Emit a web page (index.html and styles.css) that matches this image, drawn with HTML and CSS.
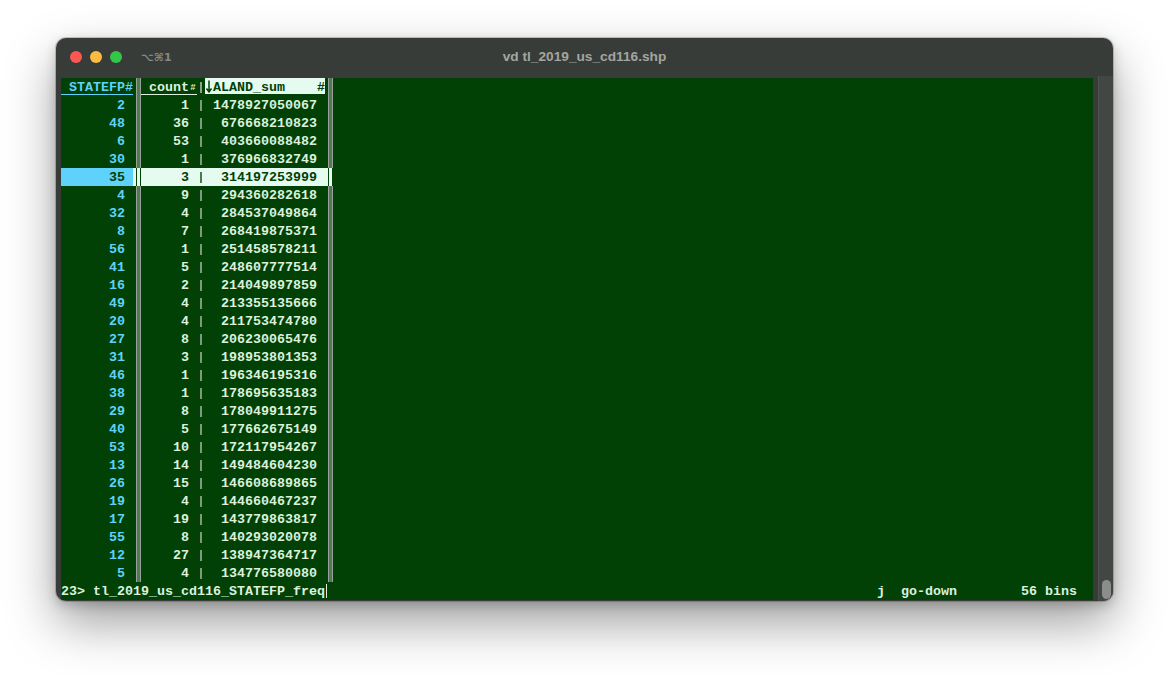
FILE: index.html
```html
<!DOCTYPE html>
<html lang="en">
<head>
<meta charset="utf-8">
<title>vd tl_2019_us_cd116.shp</title>
<link rel="stylesheet" href="styles.css">
</head>
<body>
<div class="window">
  <header class="titlebar">
    <div class="lights"><i class="light red"></i><i class="light yellow"></i><i class="light green"></i></div>
    <span class="shortcut">⌥⌘1</span>
    <span class="title">vd tl_2019_us_cd116.shp</span>
  </header>
  <div class="content">
    <main class="term">
      <div class="sheet" id="sheet">
        <div class="row head">
          <div class="c1"><span class="ul key">&nbsp;STATEFP#</span></div><div class="bar"></div>
          <div class="c2"><span class="ul">&nbsp;count<small>#</small></span></div><div class="sep"></div>
          <div class="c3"><span class="ul cur"><span class="sortname"><svg class="arrow" viewBox="0 0 8 16" width="8" height="16" aria-hidden="true"><path d="M4 2.5V13.5M1.5 10.5L4 14L6.5 10.5" fill="none" stroke="#024106" stroke-width="1.5"/></svg>ALAND_sum</span><span>#</span></span></div><div class="bar"></div>
        </div>
        <div class="row"><div class="c1">2</div><div class="bar"></div><div class="c2">1</div><div class="sep"></div><div class="c3">1478927050067</div><div class="bar"></div></div>
        <div class="row"><div class="c1">48</div><div class="bar"></div><div class="c2">36</div><div class="sep"></div><div class="c3">676668210823</div><div class="bar"></div></div>
        <div class="row"><div class="c1">6</div><div class="bar"></div><div class="c2">53</div><div class="sep"></div><div class="c3">403660088482</div><div class="bar"></div></div>
        <div class="row"><div class="c1">30</div><div class="bar"></div><div class="c2">1</div><div class="sep"></div><div class="c3">376966832749</div><div class="bar"></div></div>
        <div class="row sel"><div class="c1">35</div><div class="bar"></div><div class="c2">3</div><div class="sep"></div><div class="c3">314197253999</div><div class="bar"></div></div>
        <div class="row"><div class="c1">4</div><div class="bar"></div><div class="c2">9</div><div class="sep"></div><div class="c3">294360282618</div><div class="bar"></div></div>
        <div class="row"><div class="c1">32</div><div class="bar"></div><div class="c2">4</div><div class="sep"></div><div class="c3">284537049864</div><div class="bar"></div></div>
        <div class="row"><div class="c1">8</div><div class="bar"></div><div class="c2">7</div><div class="sep"></div><div class="c3">268419875371</div><div class="bar"></div></div>
        <div class="row"><div class="c1">56</div><div class="bar"></div><div class="c2">1</div><div class="sep"></div><div class="c3">251458578211</div><div class="bar"></div></div>
        <div class="row"><div class="c1">41</div><div class="bar"></div><div class="c2">5</div><div class="sep"></div><div class="c3">248607777514</div><div class="bar"></div></div>
        <div class="row"><div class="c1">16</div><div class="bar"></div><div class="c2">2</div><div class="sep"></div><div class="c3">214049897859</div><div class="bar"></div></div>
        <div class="row"><div class="c1">49</div><div class="bar"></div><div class="c2">4</div><div class="sep"></div><div class="c3">213355135666</div><div class="bar"></div></div>
        <div class="row"><div class="c1">20</div><div class="bar"></div><div class="c2">4</div><div class="sep"></div><div class="c3">211753474780</div><div class="bar"></div></div>
        <div class="row"><div class="c1">27</div><div class="bar"></div><div class="c2">8</div><div class="sep"></div><div class="c3">206230065476</div><div class="bar"></div></div>
        <div class="row"><div class="c1">31</div><div class="bar"></div><div class="c2">3</div><div class="sep"></div><div class="c3">198953801353</div><div class="bar"></div></div>
        <div class="row"><div class="c1">46</div><div class="bar"></div><div class="c2">1</div><div class="sep"></div><div class="c3">196346195316</div><div class="bar"></div></div>
        <div class="row"><div class="c1">38</div><div class="bar"></div><div class="c2">1</div><div class="sep"></div><div class="c3">178695635183</div><div class="bar"></div></div>
        <div class="row"><div class="c1">29</div><div class="bar"></div><div class="c2">8</div><div class="sep"></div><div class="c3">178049911275</div><div class="bar"></div></div>
        <div class="row"><div class="c1">40</div><div class="bar"></div><div class="c2">5</div><div class="sep"></div><div class="c3">177662675149</div><div class="bar"></div></div>
        <div class="row"><div class="c1">53</div><div class="bar"></div><div class="c2">10</div><div class="sep"></div><div class="c3">172117954267</div><div class="bar"></div></div>
        <div class="row"><div class="c1">13</div><div class="bar"></div><div class="c2">14</div><div class="sep"></div><div class="c3">149484604230</div><div class="bar"></div></div>
        <div class="row"><div class="c1">26</div><div class="bar"></div><div class="c2">15</div><div class="sep"></div><div class="c3">146608689865</div><div class="bar"></div></div>
        <div class="row"><div class="c1">19</div><div class="bar"></div><div class="c2">4</div><div class="sep"></div><div class="c3">144660467237</div><div class="bar"></div></div>
        <div class="row"><div class="c1">17</div><div class="bar"></div><div class="c2">19</div><div class="sep"></div><div class="c3">143779863817</div><div class="bar"></div></div>
        <div class="row"><div class="c1">55</div><div class="bar"></div><div class="c2">8</div><div class="sep"></div><div class="c3">140293020078</div><div class="bar"></div></div>
        <div class="row"><div class="c1">12</div><div class="bar"></div><div class="c2">27</div><div class="sep"></div><div class="c3">138947364717</div><div class="bar"></div></div>
        <div class="row"><div class="c1">5</div><div class="bar"></div><div class="c2">4</div><div class="sep"></div><div class="c3">134776580080</div><div class="bar"></div></div>
      </div>
      <footer class="status">
        <span class="crumb">23&gt; tl_2019_us_cd116_STATEFP_freq<b class="caret"></b></span>
        <span class="cmd">j</span>
        <span class="action">go-down</span>
        <span class="bins">56 bins</span>
      </footer>
    </main>
    <aside class="scroll"><div class="thumb"></div></aside>
  </div>
</div>
</body>
</html>
```
FILE: styles.css
```css
* { box-sizing: border-box; }
html, body { margin: 0; height: 100%; }
body {
  background: #fff;
  padding: 38px 56px 0;
  overflow: hidden;
  font-family: "Liberation Mono", monospace;
}
.window {
  width: 1057px;
  height: 563px;
  background: #383c38;
  border-radius: 10px;
  overflow: hidden;
  box-shadow: 0 0 0 1px rgba(0,0,0,.18), 0 22px 50px rgba(0,0,0,.38), 0 4px 12px rgba(0,0,0,.2);
  display: flex;
  flex-direction: column;
}
.titlebar {
  height: 38px;
  flex: none;
  display: flex;
  align-items: center;
  padding-left: 14px;
  position: relative;
  font-family: "Liberation Sans", sans-serif;
  color: #a3a5a2;
  font-size: 13px;
  font-weight: 700;
}
.lights { display: flex; gap: 8px; }
.light { width: 12px; height: 12px; border-radius: 50%; display: block; }
.red { background: #fc5753; }
.yellow { background: #fdbc40; }
.green { background: #33c748; }
.shortcut { margin-left: 19px; color: #858885; font-family: "DejaVu Sans", sans-serif; font-size: 11px; }
.title { position: absolute; left: 0; right: 0; top: 11px; text-align: center; line-height: 15px; font-size: 13.7px; }
.content { flex: 1; display: flex; padding-left: 5px; min-height: 0; }
.term {
  width: 1032px;
  margin: 2px 0 1px;
  background: #024106;
  color: #dcf0dc;
  font-size: 13.33px;
  font-weight: 700;
  line-height: 20px;
  display: flex;
  flex-direction: column;
}
.sheet { display: flex; flex-direction: column; }
.row { display: flex; height: 18px; width: 272px; }
.c1, .c2, .c3 { text-align: right; padding-right: 8px; height: 18px; white-space: pre; }
.c1 { width: 72px; color: #5fd2fb; }
.c2 { width: 56px; }
.c3 { width: 120px; }
.bar { width: 8px; position: relative; }
.bar::before {
  content: ""; position: absolute; left: 3px; top: 0; bottom: 0; width: 3px;
  border-left: 1px solid #98a298; border-right: 1px solid #98a298;
  background: #4f7a52;
}
.sep { width: 8px; position: relative; }
.sep::before {
  content: ""; position: absolute; left: 3px; top: 4px; bottom: 3px; width: 2px;
  background: #7f9880;
}
.head .c1, .head .c2, .head .c3 { padding-right: 0; }
.head .sep::before { background: #8aa38b; }
.ul { display: flex; justify-content: flex-end; height: 17px; border-bottom: 1px solid currentColor; line-height: 20px; align-items: flex-start; }
.key { color: #5fd2fb; }
.ul small { width: 8px; font-size: 9px; font-weight: 700; text-align: center; }
.sortname { display: flex; align-items: flex-start; }
.arrow { display: block; flex: none; }
.cur { background: #e6fbef; color: #024106; justify-content: space-between; }
.sel { background: #e6fbef; color: #024106; }
.sel .c1 { background: #5fd2fb; color: #024106; }
.sel .bar::before { border-color: #024106; background: #e6fbef; }
.sel .sep::before { background: #4b7a50; }
.status { height: 18px; display: flex; white-space: pre; }
.crumb { width: 816px; display: flex; }
.caret { width: 1px; height: 14px; margin: 2px 0 0 1px; background: #dcf0dc; }
.cmd { width: 24px; }
.action { width: 120px; }
.bins { width: 56px; }
.scroll {
  width: 15px;
  margin-left: 5px;
  background: #434743;
  border-left: 1px solid #505450;
  display: flex;
  flex-direction: column;
  justify-content: flex-end;
  align-items: center;
  padding: 0 0 2px 1px;
}
.thumb { width: 9px; height: 19px; border-radius: 5px; background: #8a8d8a; }
```
